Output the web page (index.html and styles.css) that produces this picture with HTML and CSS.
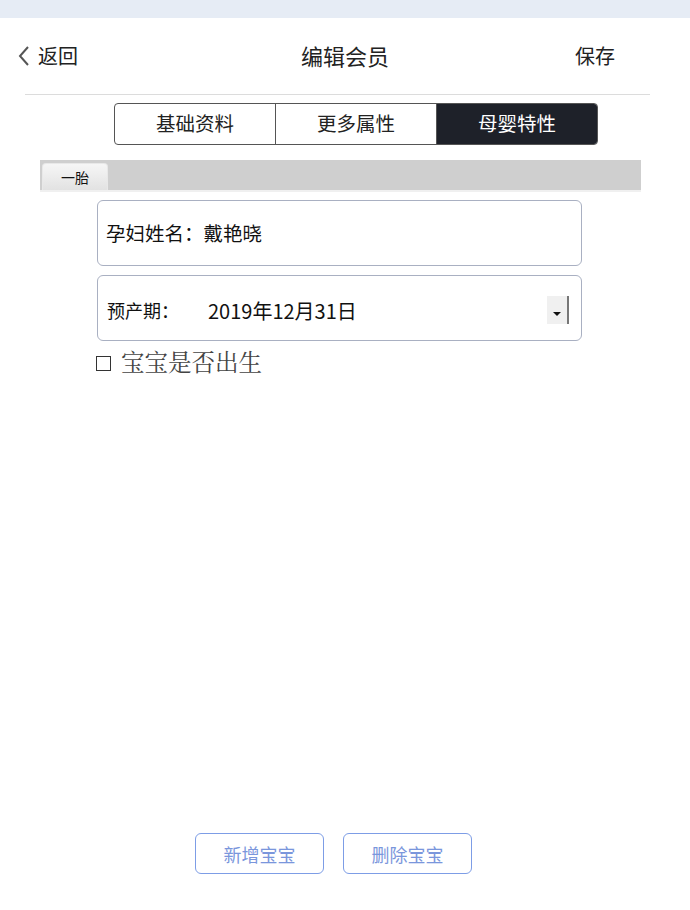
FILE: index.html
```html
<!DOCTYPE html>
<html lang="zh">
<head>
<meta charset="utf-8">
<link rel="stylesheet" href="styles.css">
</head>
<body>
<div class="topbar"></div>
<header class="header">
  <div class="back">
    <svg class="chev" width="14" height="22" viewBox="0 0 14 22"><path d="M11 2 L3 11 L11 20" fill="none" stroke="#555" stroke-width="2"/></svg>
    <span>返回</span>
  </div>
  <div class="title">编辑会员</div>
  <div class="save">保存</div>
</header>
<div class="divider"></div>
<div class="seg">
  <div class="seg-item">基础资料</div>
  <div class="seg-item">更多属性</div>
  <div class="seg-item active">母婴特性</div>
</div>
<div class="tabbar">
  <div class="tab">一胎</div>
</div>
<div class="tabline"></div>
<div class="form">
  <div class="field"><span class="label">孕妇姓名：</span><span>戴艳晓</span></div>
  <div class="field date">
    <span class="label">预产期：</span><span class="dval">2019年12月31日</span>
    <span class="drop"><svg width="10" height="6" viewBox="0 0 10 6"><path d="M1 1 H9 L5 5 Z" fill="#111"/></svg></span>
  </div>
  <label class="check"><span class="box"></span><span class="ctext">宝宝是否出生</span></label>
</div>
<div class="spacer"></div>
<div class="actions">
  <button class="btn">新增宝宝</button>
  <button class="btn">删除宝宝</button>
</div>
</body>
</html>
```
FILE: styles.css
```css
* { box-sizing: border-box; }
html, body { margin: 0; padding: 0; background: #fff; }
body {
  width: 690px; height: 910px;
  font-family: "Noto Sans CJK SC", "Microsoft YaHei", sans-serif;
  color: #222;
  display: flex; flex-direction: column;
}
.topbar { height: 18px; background: #e6ecf5; }
.header {
  height: 76px; display: flex; align-items: center; justify-content: space-between;
  padding: 0 75px 2px 17px; position: relative; font-size: 20px; color: #222;
}
.back { display: flex; align-items: center; gap: 7px; }
.chev { margin-top: 1px; }
.title { position: absolute; left: 0; right: 0; top: 0; bottom: 2px; display: flex; align-items: center; justify-content: center; font-size: 22px; pointer-events: none; }
.save { font-size: 20px; }
.divider { height: 1px; background: #dcdcdc; margin: 0 40px 0 25px; }
.seg {
  display: flex; margin: 8px 0 0 114px; width: 484px; height: 42px;
  border: 1px solid #555; border-radius: 4px; overflow: hidden;
}
.seg-item {
  flex: 1; display: flex; align-items: center; justify-content: center;
  font-size: 19.5px; color: #222; border-right: 1px solid #555; padding-bottom: 3px;
}
.seg-item:last-child { border-right: none; }
.seg-item.active { background: #1e2129; color: #fff; }
.tabbar {
  margin: 15px 49px 0 40px; height: 30px; background: #cfcfcf;
  padding: 3px 0 0 2px; display: flex;
}
.tab {
  width: 66px; height: 27px; border: 1px solid #e8e8e8; border-bottom: none;
  border-radius: 4px 4px 0 0;
  background: linear-gradient(#f6f6f6, #e2e2e2);
  font-size: 14px; color: #111; display: flex; align-items: center; justify-content: center;
}
.tabline { height: 2px; margin: 0 49px 0 40px; background: #f0f0f0; }
.form { padding: 8px 0 0 96px; width: 582px; display: flex; flex-direction: column; }
.field {
  height: 66px; margin-left: 1px; border: 1px solid #a9b0c2; border-radius: 6px;
  display: flex; align-items: center; padding: 0 0 2px 8px; font-size: 19.5px; color: #111;
  margin-bottom: 9px;
}
.field.date { position: relative; padding-top: 4px; padding-bottom: 0; padding-left: 9px; }
.date .label { font-size: 18px; width: 101px; }
.dval { font-size: 20px; }
.drop {
  position: absolute; right: 12px; top: 20px; width: 22px; height: 28px;
  background: #f0f0f0; border-right: 2px solid #777;
  display: flex; align-items: center; justify-content: center; padding-top: 8px;
}
.check { display: flex; align-items: center; gap: 10px; margin-top: 0; height: 24px; line-height: 1; }
.box { width: 15px; height: 15px; border: 1.5px solid #333; margin-top: 2px; }
.ctext { font-family: "Noto Serif CJK SC", "Liberation Serif", serif; font-size: 23.5px; color: #444; line-height: 1; }
.spacer { flex: 1; }
.actions { display: flex; gap: 19px; padding-left: 195px; margin-bottom: 36px; }
.btn {
  width: 129px; height: 41px; border: 1px solid #7d9de6; border-radius: 6px;
  background: #fff; color: #7a96dc; font-size: 18px;
  font-family: "Noto Sans CJK SC", sans-serif;
}
```
